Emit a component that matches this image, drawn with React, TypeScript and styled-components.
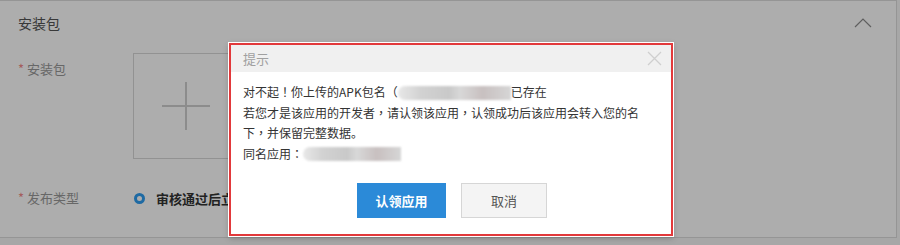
import { FC } from "react";
import styled, { createGlobalStyle } from "styled-components";

const GlobalStyle = createGlobalStyle`
  html, body {
    margin: 0;
    padding: 0;
    background: #f7f7f7;
    font-family: "Noto Sans CJK SC", "Noto Sans", sans-serif;
  }
  #root {
    position: relative;
    width: 900px;
    height: 245px;
    overflow: hidden;
  }
`;

const Card = styled.div`
  width: 897px;
  height: 238px;
  background: #fff;
  border: 1px solid #dcdcdc;
  border-left: none;
  box-sizing: border-box;
`;

const CardHeader = styled.div`
  display: flex;
  align-items: center;
  justify-content: space-between;
  height: 44px;
  padding: 0 24px 0 18px;
  font-size: 14px;
  color: #555;
`;

const FormRow = styled.div<{ $mt: number }>`
  display: flex;
  align-items: flex-start;
  margin-top: ${({ $mt }) => $mt}px;
`;

const Label = styled.div`
  width: 115px;
  padding-left: 18px;
  line-height: 32px;
  font-size: 13px;
  color: #999;
  flex-shrink: 0;
`;

const Star = styled.span`
  color: #f28a8a;
  margin-right: 3px;
`;

const UploadBox = styled.div`
  width: 106px;
  height: 106px;
  border: 1px solid #d8d8d8;
  box-sizing: border-box;
  display: flex;
  align-items: center;
  justify-content: center;
`;

const RadioRow = styled.div`
  display: flex;
  align-items: center;
  height: 32px;
  gap: 11px;
  margin-left: 1px;
  font-size: 13px;
  font-weight: 600;
  color: #333;
`;

const Radio = styled.span`
  width: 11px;
  height: 11px;
  border-radius: 50%;
  border: 3px solid #2d9cf1;
  background: #fff;
  box-sizing: border-box;
`;

const Mask = styled.div`
  position: absolute;
  inset: 0;
  background: rgba(0, 0, 0, 0.32);
`;

const Dialog = styled.div`
  position: absolute;
  left: 229px;
  top: 43px;
  width: 444px;
  height: 193px;
  box-sizing: border-box;
  background: #fff;
  border: 2px solid #e2393b;
  box-shadow: 0 0 0 1px #fff, 0 2px 6px rgba(0, 0, 0, 0.25);
`;

const DialogHeader = styled.div`
  display: flex;
  align-items: center;
  justify-content: space-between;
  height: 27px;
  padding: 0 9px 0 12px;
  background: #f0f0f0;
  font-size: 13px;
  color: #a0a0a0;
`;

const DialogBody = styled.div`
  padding: 10px 12px 0 12px;
  width: 402px;
  font-size: 12px;
  line-height: 20.5px;
  color: #333;
`;

/* full-width punctuation sits centred in the reference font */
const Punct = styled.span`
  font-family: "Noto Sans CJK TC", "Noto Sans CJK SC", sans-serif;
  line-height: 1;
`;

const Blur = styled.span<{ $w: number }>`
  display: inline-block;
  vertical-align: middle;
  width: ${({ $w }) => $w}px;
  height: 14px;
  margin-top: -2px;
  border-radius: 7px 0 0 7px;
  background: linear-gradient(
    90deg,
    #e8e8e8 0%,
    #d2d2d2 20%,
    #c9c9c9 45%,
    #d8d8d8 55%,
    #c8c0c0 75%,
    #d6d6d6 100%
  );
  filter: blur(1px);
`;

const Buttons = styled.div`
  display: flex;
  justify-content: center;
  gap: 15px;
  margin-top: 19px;
  padding-left: 2px;
`;

const Button = styled.button<{ $primary?: boolean; $w: number }>`
  width: ${({ $w }) => $w}px;
  height: 35px;
  font-family: inherit;
  font-size: 13px;
  cursor: pointer;
  border: 1px solid ${({ $primary }) => ($primary ? "#2b8ad8" : "#d6d6d6")};
  background: ${({ $primary }) => ($primary ? "#2b8ad8" : "#f4f4f4")};
  color: ${({ $primary }) => ($primary ? "#fff" : "#555")};
  font-weight: ${({ $primary }) => ($primary ? 600 : 400)};
`;

const Chevron: FC = () => (
  <svg width="18" height="10" viewBox="0 0 18 10">
    <path d="M1 9 L9 1 L17 9" fill="none" stroke="#8c8c8c" strokeWidth="1.2" />
  </svg>
);

const Plus: FC = () => (
  <svg width="48" height="48" viewBox="0 0 48 48">
    <path d="M0 24 H48 M24 0 V48" stroke="#cfcfcf" strokeWidth="2" />
  </svg>
);

const Close: FC = () => (
  <svg width="15" height="15" viewBox="0 0 15 15">
    <path d="M1 1 L14 14 M14 1 L1 14" stroke="#cfcfcf" strokeWidth="1.3" />
  </svg>
);

const App: FC = () => (
  <>
    <GlobalStyle />
    <Card>
      <CardHeader>
        <span>安装包</span>
        <Chevron />
      </CardHeader>
      <FormRow $mt={8}>
        <Label>
          <Star>*</Star>安装包
        </Label>
        <UploadBox>
          <Plus />
        </UploadBox>
      </FormRow>
      <FormRow $mt={23}>
        <Label>
          <Star>*</Star>发布类型
        </Label>
        <RadioRow>
          <Radio />
          审核通过后立即发布
        </RadioRow>
      </FormRow>
    </Card>
    <Mask />
    <Dialog>
      <DialogHeader>
        <span>提示</span>
        <Close />
      </DialogHeader>
      <DialogBody>
        <div>
          对不起<Punct>！</Punct>你上传的APK包名（<Blur $w={113} />已存在
        </div>
        <div>
          若您才是该应用的开发者<Punct>，</Punct>请认领该应用<Punct>，</Punct>
          认领成功后该应用会转入您的名下<Punct>，</Punct>并保留完整数据。
        </div>
        <div>
          同名应用<Punct>：</Punct>
          <Blur $w={98} />
        </div>
      </DialogBody>
      <Buttons>
        <Button $primary $w={89}>
          认领应用
        </Button>
        <Button $w={86}>取消</Button>
      </Buttons>
    </Dialog>
  </>
);

export default App;
